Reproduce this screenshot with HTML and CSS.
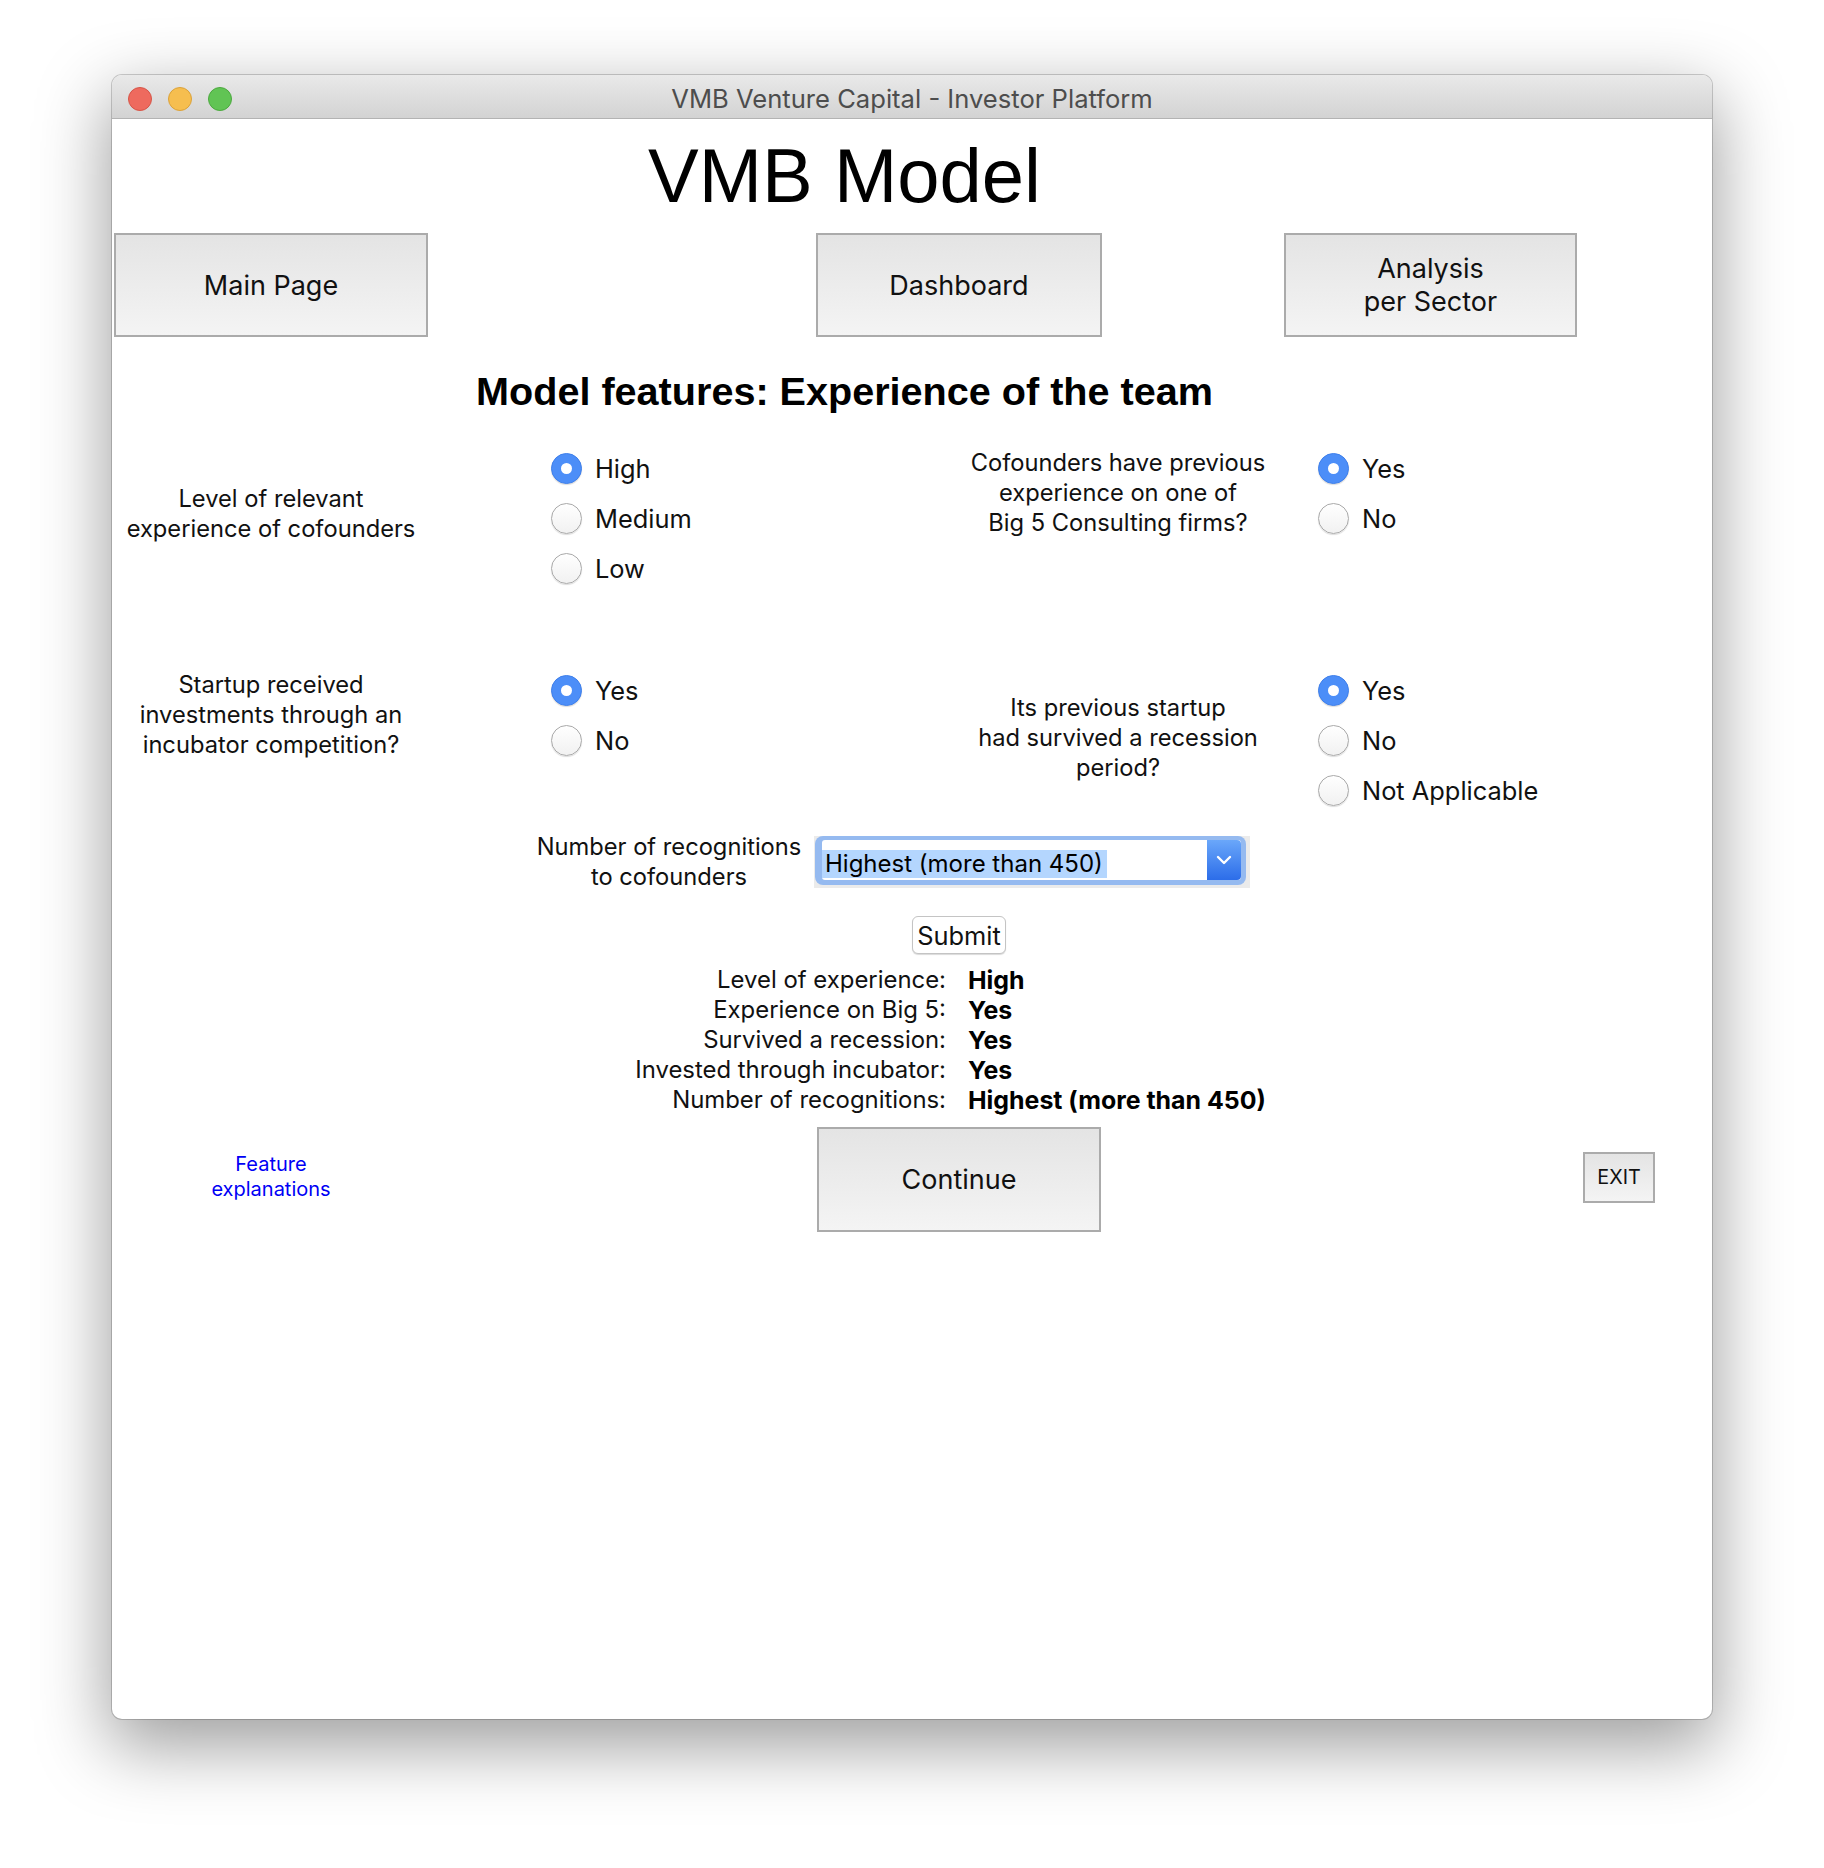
FILE: index.html
```html
<!DOCTYPE html>
<html lang="en">
<head>
<meta charset="utf-8">
<title>VMB Venture Capital - Investor Platform</title>
<link rel="stylesheet" href="styles.css">
</head>
<body>
<div class="window">
  <div class="titlebar">
    <div class="lights">
      <span class="light red"></span>
      <span class="light yellow"></span>
      <span class="light green"></span>
    </div>
    <div class="wtitle">VMB Venture Capital - Investor Platform</div>
    <div class="tb-spacer"></div>
  </div>

  <div class="content">
    <h1 class="title">VMB Model</h1>

    <div class="navrow">
      <div class="tkbtn nav-main">Main Page</div>
      <div class="tkbtn nav-dash">Dashboard</div>
      <div class="tkbtn nav-sector">Analysis<br>per Sector</div>
    </div>

    <h2 class="heading">Model features: Experience of the team</h2>

    <div class="qrow qrow-1">
      <div class="pair pair-left">
        <div class="qlabel qlabel-left shift-4">Level of relevant<br>experience of cofounders</div>
        <div class="radios radios-left">
          <div class="radio on"><span class="rcircle"></span>High</div>
          <div class="radio"><span class="rcircle"></span>Medium</div>
          <div class="radio"><span class="rcircle"></span>Low</div>
        </div>
      </div>
      <div class="pair pair-right">
        <div class="qlabel qlabel-right">Cofounders have previous<br>experience on one of<br>Big 5 Consulting firms?</div>
        <div class="radios radios-right">
          <div class="radio on"><span class="rcircle"></span>Yes</div>
          <div class="radio"><span class="rcircle"></span>No</div>
        </div>
      </div>
    </div>

    <div class="qrow qrow-2">
      <div class="pair pair-left">
        <div class="qlabel qlabel-left">Startup received<br>investments through an<br>incubator competition?</div>
        <div class="radios radios-left">
          <div class="radio on"><span class="rcircle"></span>Yes</div>
          <div class="radio"><span class="rcircle"></span>No</div>
        </div>
      </div>
      <div class="pair pair-right">
        <div class="qlabel qlabel-right shift-2">Its previous startup<br>had survived a recession<br>period?</div>
        <div class="radios radios-right">
          <div class="radio on"><span class="rcircle"></span>Yes</div>
          <div class="radio"><span class="rcircle"></span>No</div>
          <div class="radio"><span class="rcircle"></span>Not Applicable</div>
        </div>
      </div>
    </div>

    <div class="recog-row">
      <div class="recog-label">Number of recognitions<br>to cofounders</div>
      <div class="combo">
        <div class="combo-ring">
          <div class="combo-field">
            <div class="combo-text"><span class="combo-sel">Highest (more than 450)</span></div>
            <div class="combo-btn">
              <svg width="16" height="10" viewBox="0 0 16 10"><path d="M2 2 L8 8 L14 2" fill="none" stroke="#fff" stroke-width="2.4" stroke-linecap="round" stroke-linejoin="round"/></svg>
            </div>
          </div>
        </div>
      </div>
    </div>

    <div class="submit-row">
      <div class="submit">Submit</div>
    </div>

    <div class="results">
      <div class="rk">Level of experience:</div><div class="rv">High</div>
      <div class="rk">Experience on Big 5:</div><div class="rv">Yes</div>
      <div class="rk">Survived a recession:</div><div class="rv">Yes</div>
      <div class="rk">Invested through incubator:</div><div class="rv">Yes</div>
      <div class="rk">Number of recognitions:</div><div class="rv">Highest (more than 450)</div>
    </div>

    <div class="bottom-row">
      <div class="feature-link">Feature<br>explanations</div>
      <div class="tkbtn continue">Continue</div>
      <div class="tkbtn exit">EXIT</div>
    </div>
  </div>
</div>
</body>
</html>
```
FILE: styles.css
```css
html, body {
  margin: 0;
  padding: 0;
  background: #ffffff;
}

body {
  font-family: "Inter", "Liberation Sans", sans-serif;
  color: #111111;
  padding: 75px 0 149px;
}

.window {
  width: 1600px;
  margin: 0 auto;
  border-radius: 10px;
  background: #ffffff;
  box-shadow: 0 24px 70px 4px rgba(0, 0, 0, 0.38), 0 0 0 1px rgba(0, 0, 0, 0.18);
  overflow: hidden;
}

/* ---------- title bar ---------- */
.titlebar {
  height: 44px;
  box-sizing: border-box;
  display: grid;
  grid-template-columns: 1fr auto 1fr;
  align-items: center;
  background: linear-gradient(#e9e9e9, #d3d3d3);
  border-bottom: 1px solid #b3b3b3;
}

.lights {
  display: flex;
  gap: 16px;
  padding-left: 16px;
  padding-top: 2px;
}

.light {
  width: 24px;
  height: 24px;
  border-radius: 50%;
  box-sizing: border-box;
}

.red { background: #ee6a5e; border: 1px solid #d65548; }
.yellow { background: #f6be4f; border: 1px solid #dba23a; }
.green { background: #61c454; border: 1px solid #4ca93f; }

.wtitle {
  font-family: "Inter", sans-serif;
  font-size: 25.6px;
  line-height: 44px;
  color: #4d4d4d;
  padding-top: 2px;
}

/* ---------- content ---------- */
.content {
  height: 1600px;
  padding-top: 12px;
  box-sizing: border-box;
}

.title {
  margin: 0;
  width: 1465px;
  text-align: center;
  font-family: "Liberation Sans", Arial, sans-serif;
  font-weight: 400;
  font-size: 76px;
  line-height: 90px;
  color: #000000;
}

.navrow {
  display: flex;
  margin-top: 12px;
  height: 104px;
}

.tkbtn {
  box-sizing: border-box;
  border: 2px solid #ababab;
  background: linear-gradient(#e4e4e4, #f4f4f4);
  display: flex;
  align-items: center;
  justify-content: center;
  text-align: center;
  font-family: "Inter", sans-serif;
  font-size: 27px;
  line-height: 33px;
  color: #111111;
}

.nav-main { margin-left: 2px; width: 314px; }
.nav-dash { margin-left: 388px; width: 286px; }
.nav-sector { margin-left: 182px; width: 293px; }

.heading {
  margin: 29px 0 0;
  width: 1465px;
  text-align: center;
  font-family: "Liberation Sans", Arial, sans-serif;
  font-weight: 700;
  font-size: 39.6px;
  line-height: 50px;
  color: #000000;
}

/* ---------- question rows ---------- */
.qrow {
  display: flex;
  align-items: flex-start;
}

.qrow-1 { margin-top: 27px; }
.qrow-2 { margin-top: 72px; }

.pair {
  display: flex;
  align-items: center;
}

.pair-left { width: 846px; }

.qlabel {
  text-align: center;
  font-size: 23.7px;
  line-height: 30px;
  color: #111111;
}

.qlabel-left { width: 318px; }
.qlabel-right { width: 320px; }

.shift-4 { margin-bottom: 8px; }
.shift-2 { margin-bottom: 5px; }

.radios-left { margin-left: 121px; }
.radios-right { margin-left: 40px; }

.radio {
  height: 50px;
  display: flex;
  align-items: center;
  font-size: 25.4px;
  color: #111111;
  white-space: nowrap;
}

.rcircle {
  flex: none;
  width: 31px;
  height: 31px;
  margin-right: 13px;
  box-sizing: border-box;
  border-radius: 50%;
  background: linear-gradient(#ffffff, #f1f1f1);
  border: 1px solid #a9a9a9;
  box-shadow: 0 1px 1px rgba(0, 0, 0, 0.14);
  display: flex;
  align-items: center;
  justify-content: center;
}

.radio.on .rcircle {
  background: #4c8ef8;
  border-color: #3f80ec;
}

.radio.on .rcircle::after {
  content: "";
  width: 11px;
  height: 11px;
  border-radius: 50%;
  background: #ffffff;
}

/* ---------- recognitions ---------- */
.recog-row {
  display: flex;
  align-items: center;
  margin-top: 17px;
  padding-left: 417px;
}

.recog-label {
  width: 280px;
  text-align: center;
  font-size: 23.7px;
  line-height: 30px;
}

.combo {
  margin-left: 5px;
  width: 436px;
  height: 52px;
  box-sizing: border-box;
  padding: 0 4px 3px 1px;
  background: #ebebeb;
}

.combo-ring {
  height: 49px;
  box-sizing: border-box;
  padding: 4px 5px 5px 7px;
  border-radius: 8px;
  background: #95baf0;
}

.combo-field {
  height: 40px;
  display: flex;
  background: #ffffff;
  border-radius: 3px;
}

.combo-text {
  flex: 1;
  display: flex;
  align-items: center;
}

.combo-sel {
  display: inline-block;
  height: 28px;
  line-height: 28px;
  padding: 0 4px 0 3px;
  background: #b4d6fe;
  font-size: 24px;
  color: #000000;
  margin-top: 7px;
}

.combo-btn {
  width: 34px;
  border-radius: 0 4px 4px 0;
  background: linear-gradient(#6aa7fa, #2c6de9);
  display: flex;
  align-items: center;
  justify-content: center;
}

/* ---------- submit ---------- */
.submit-row {
  margin-top: 24px;
  padding-left: 800px;
}

.submit {
  width: 94px;
  height: 38px;
  box-sizing: border-box;
  border: 1px solid #c4c4c4;
  border-radius: 6px;
  background: #ffffff;
  box-shadow: 0 1px 1px rgba(0, 0, 0, 0.15);
  display: flex;
  align-items: center;
  justify-content: center;
  font-size: 25.4px;
  color: #111111;
}

/* ---------- results ---------- */
.results {
  margin-top: 11px;
  display: grid;
  grid-template-columns: 834px auto;
  column-gap: 22px;
  line-height: 30px;
}

.rk {
  text-align: right;
  font-size: 23.9px;
  color: #111111;
}

.rv {
  font-size: 24.9px;
  font-weight: 700;
  color: #000000;
}

/* ---------- bottom ---------- */
.bottom-row {
  display: flex;
  align-items: center;
  margin-top: 12px;
  height: 105px;
}

.feature-link {
  width: 318px;
  text-align: center;
  font-size: 20px;
  line-height: 25px;
  color: #0000f5;
  margin-bottom: 6px;
}

.continue {
  margin-left: 387px;
  width: 284px;
  height: 105px;
}

.exit {
  margin-left: 482px;
  width: 72px;
  height: 51px;
  margin-bottom: 4px;
  font-size: 19.8px;
}
```
